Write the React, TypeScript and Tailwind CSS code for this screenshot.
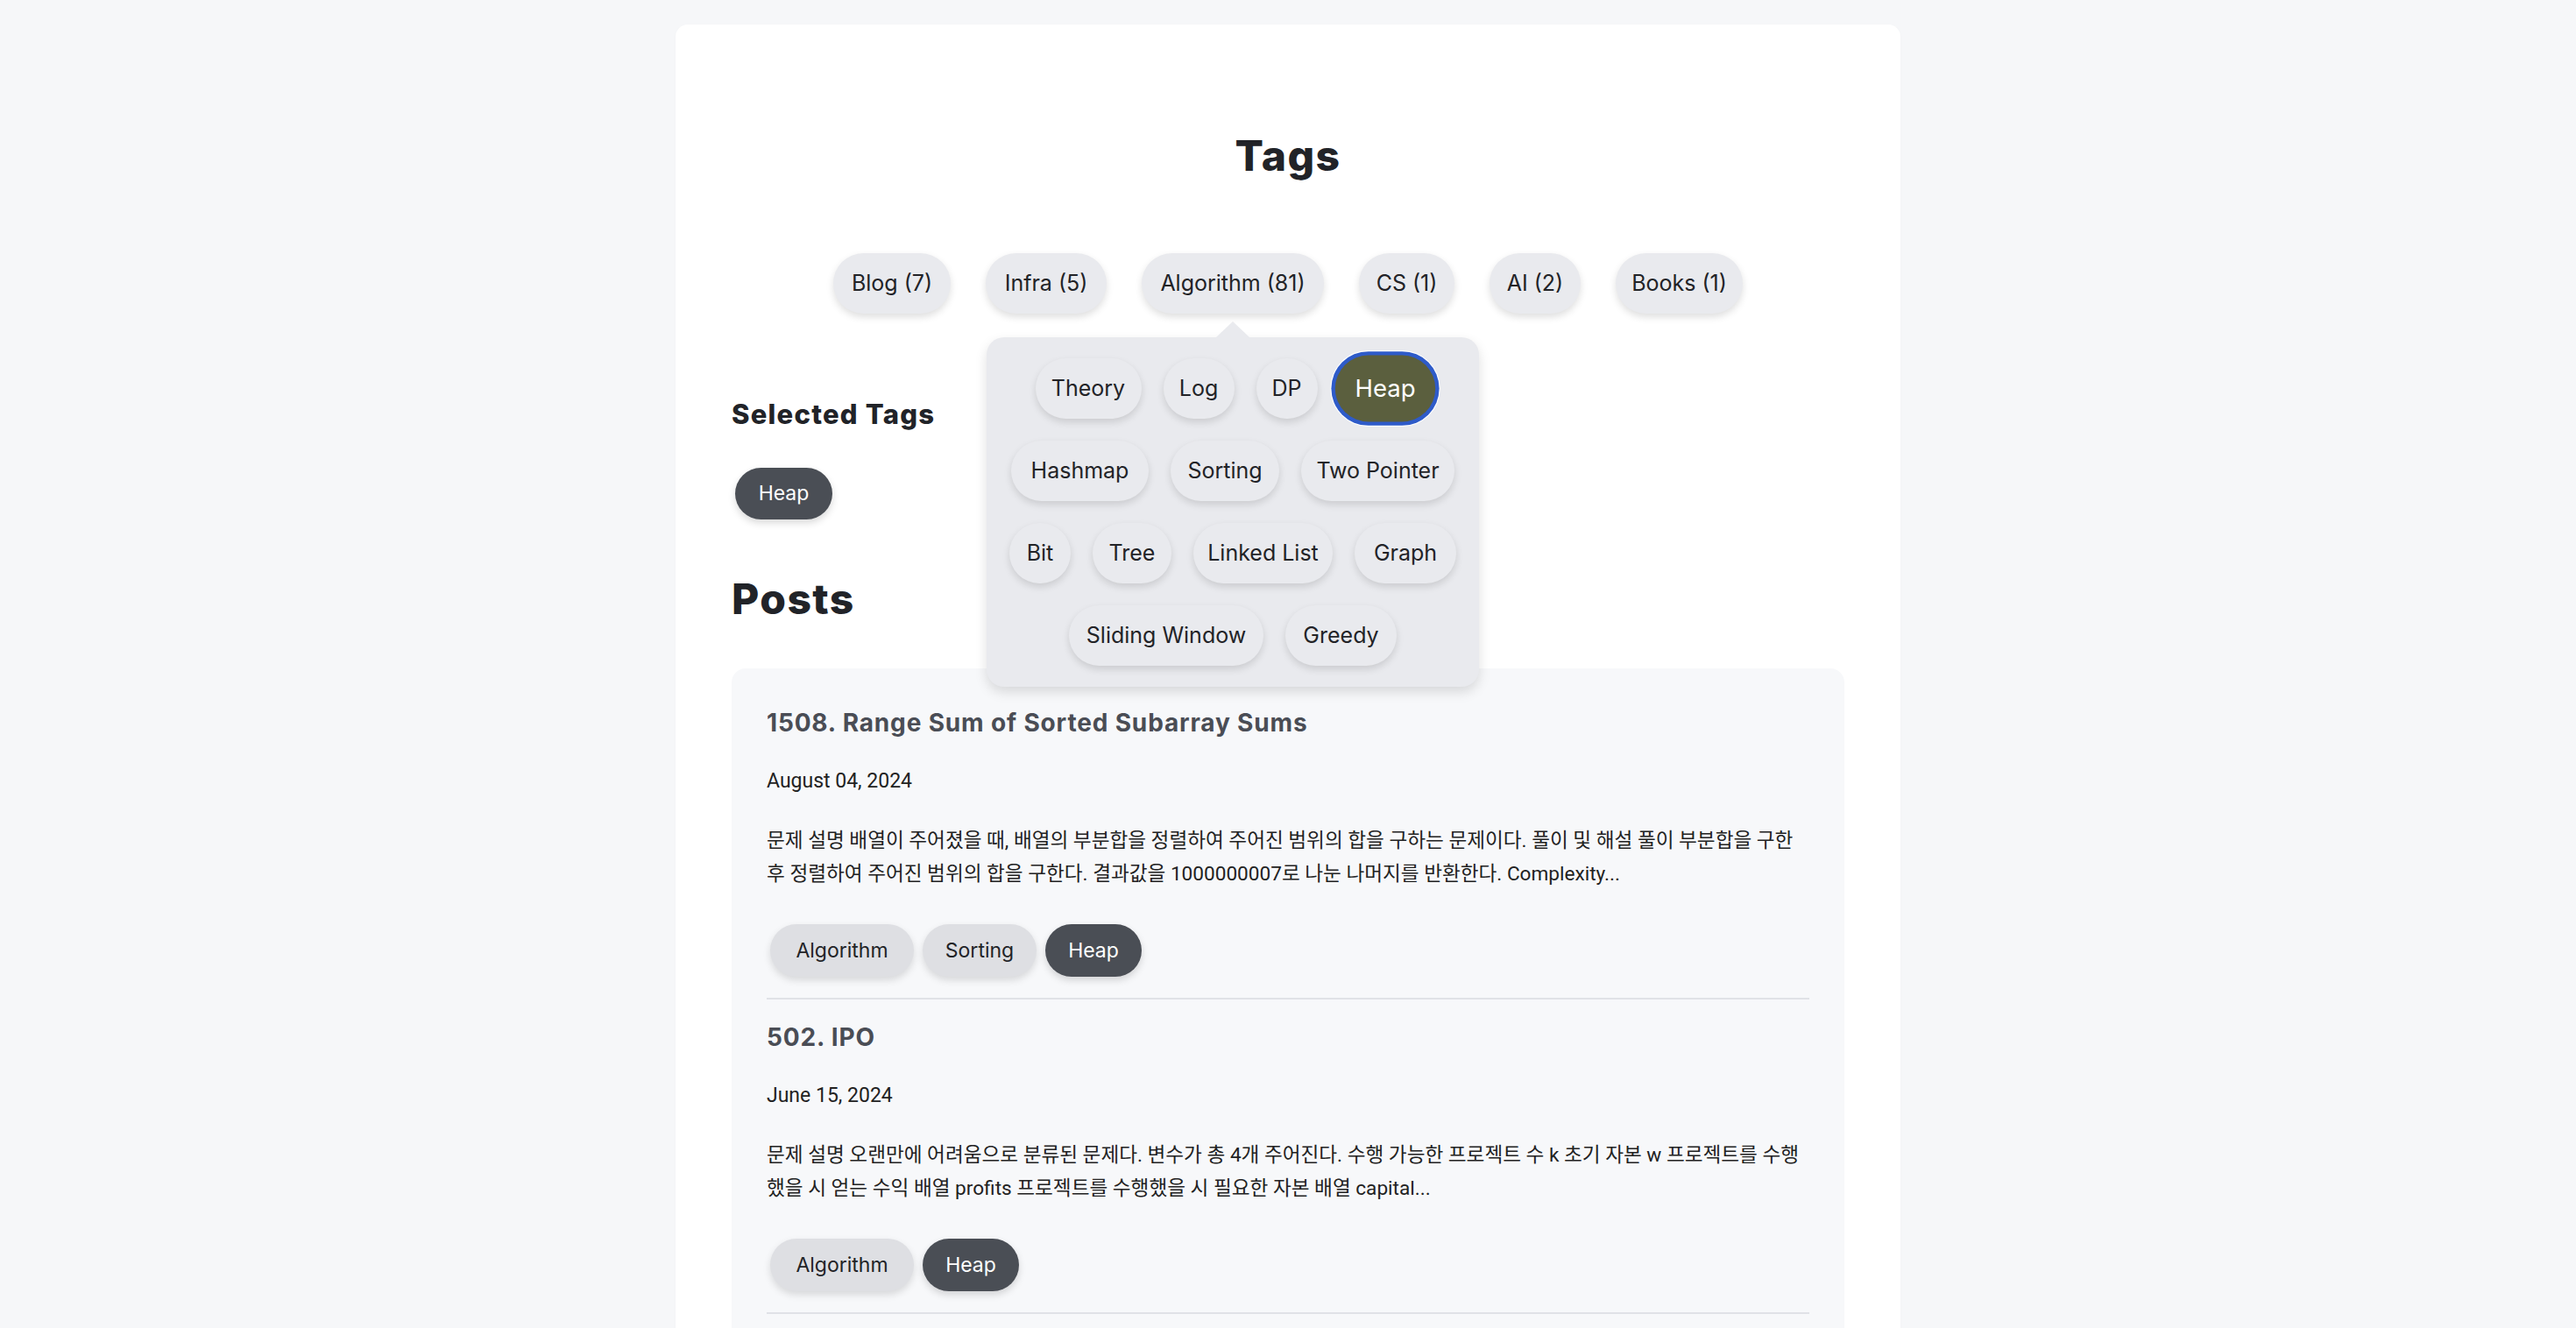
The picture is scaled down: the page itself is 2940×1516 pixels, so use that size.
import React from "react";

type Chip = { label: string; w: string; active?: boolean };

const topTags: Chip[] = [
  { label: "Blog (7)", w: "w-[134px]" },
  { label: "Infra (5)", w: "w-[138px]" },
  { label: "Algorithm (81)", w: "w-[208px]" },
  { label: "CS (1)", w: "w-[109px]" },
  { label: "AI (2)", w: "w-[104px]" },
  { label: "Books (1)", w: "w-[145px]" },
];

const popRows: Chip[][] = [
  [
    { label: "Theory", w: "w-[121px]" },
    { label: "Log", w: "w-[81px]" },
    { label: "DP", w: "w-[70px]" },
    { label: "Heap", w: "w-[104px]", active: true },
  ],
  [
    { label: "Hashmap", w: "w-[157px]" },
    { label: "Sorting", w: "w-[124px]" },
    { label: "Two Pointer", w: "w-[175px]" },
  ],
  [
    { label: "Bit", w: "w-[70px]" },
    { label: "Tree", w: "w-[90px]" },
    { label: "Linked List", w: "w-[159px]" },
    { label: "Graph", w: "w-[116px]" },
  ],
  [
    { label: "Sliding Window", w: "w-[222px]" },
    { label: "Greedy", w: "w-[127px]" },
  ],
];

type Post = {
  title: string;
  date: string;
  excerpt: string;
  tags: { label: string; w: string; dark?: boolean }[];
};

const posts: Post[] = [
  {
    title: "1508. Range Sum of Sorted Subarray Sums",
    date: "August 04, 2024",
    excerpt:
      "문제 설명 배열이 주어졌을 때, 배열의 부분합을 정렬하여 주어진 범위의 합을 구하는 문제이다. 풀이 및 해설 풀이 부분합을 구한 후 정렬하여 주어진 범위의 합을 구한다. 결과값을 1000000007로 나눈 나머지를 반환한다. Complexity...",
    tags: [
      { label: "Algorithm", w: "w-[164px]" },
      { label: "Sorting", w: "w-[130px]" },
      { label: "Heap", w: "w-[110px]", dark: true },
    ],
  },
  {
    title: "502. IPO",
    date: "June 15, 2024",
    excerpt:
      "문제 설명 오랜만에 어려움으로 분류된 문제다. 변수가 총 4개 주어진다. 수행 가능한 프로젝트 수 k 초기 자본 w 프로젝트를 수행했을 시 얻는 수익 배열 profits 프로젝트를 수행했을 시 필요한 자본 배열 capital...",
    tags: [
      { label: "Algorithm", w: "w-[164px]" },
      { label: "Heap", w: "w-[110px]", dark: true },
    ],
  },
];

function TagChip({ chip }: { chip: Chip }) {
  if (chip.active) {
    return (
      <div
        className={`${chip.w} flex h-[69px] scale-110 items-center justify-center rounded-full bg-[#5b5f3e] text-[25px] text-white shadow-[0_0_0_4px_#2e5bc9,0_0_0_5px_#ffffff]`}
      >
        {chip.label}
      </div>
    );
  }
  return (
    <div
      className={`${chip.w} flex h-[69px] items-center justify-center rounded-full bg-[#e9eaee] text-[25px] text-[#222327] shadow-[0_4px_8px_rgba(0,0,0,0.13)]`}
    >
      {chip.label}
    </div>
  );
}

function Popover() {
  return (
    <div className="absolute left-1/2 top-[96px] z-10 w-[562px] -translate-x-1/2">
      <div className="absolute -top-[18px] left-1/2 h-0 w-0 -translate-x-1/2 border-x-[19px] border-b-[18px] border-x-transparent border-b-[#e9eaee]" />
      <div className="flex flex-col gap-[25px] rounded-[20px] bg-[#e9eaee] px-[24px] py-[24px] shadow-[0_6px_14px_rgba(0,0,0,0.13)]">
        {popRows.map((row, i) => (
          <div key={i} className="flex justify-center gap-[25px]">
            {row.map((c) => (
              <TagChip key={c.label} chip={c} />
            ))}
          </div>
        ))}
      </div>
    </div>
  );
}

export default function App() {
  return (
    <div className="min-h-screen bg-[#f6f7f9] pt-[28px] font-[family-name:Inter,sans-serif]">
      <div className="mx-auto w-[1398px] rounded-[14px] bg-white px-[64px] pb-[64px] pt-[121px] shadow-[0_1px_3px_rgba(0,0,0,0.03)]">
        <h1 className="text-center text-[48px] font-extrabold leading-[58px] tracking-[0.03em] text-[#212328]">
          Tags
        </h1>

        <div className="mt-[82px] flex justify-center gap-[40px]">
          {topTags.map((c) => (
            <div key={c.label} className="relative">
              <TagChip chip={c} />
              {c.label.startsWith("Algorithm") && <Popover />}
            </div>
          ))}
        </div>

        <h2 className="mt-[96px] text-[31px] font-extrabold leading-[38px] tracking-[0.04em] text-[#212328]">
          Selected Tags
        </h2>
        <div className="mt-[42px] flex pl-[4px]">
          <div className="flex h-[59px] w-[111px] items-center justify-center rounded-full bg-[#4a4e55] text-[23px] text-white shadow-[0_4px_8px_rgba(0,0,0,0.15)]">
            Heap
          </div>
        </div>

        <h2 className="mt-[62px] text-[48px] font-extrabold leading-[58px] tracking-[0.03em] text-[#212328]">
          Posts
        </h2>

        <div className="mt-[50px] rounded-[16px] bg-[#f7f8fa] px-[40px] pb-[40px] pt-[44px]">
          {posts.map((p) => (
            <div key={p.title}>
              <h3 className="text-[28px] font-bold leading-[36px] tracking-[0.03em] text-[#4a4d55]">
                {p.title}
              </h3>
              <p className="mt-[32px] font-[family-name:Roboto,'Noto_Sans_CJK_KR',sans-serif] text-[23px] leading-[33px] text-[#222222]">
                {p.date}
              </p>
              <p className="mt-[33px] font-[family-name:Roboto,'Noto_Sans_CJK_KR',sans-serif] text-[22.6px] leading-[38px] text-[#222222]">
                {p.excerpt}
              </p>
              <div className="mt-[38px] flex gap-[10px] pl-[4px]">
                {p.tags.map((t) =>
                  t.dark ? (
                    <div
                      key={t.label}
                      className={`${t.w} flex h-[60px] items-center justify-center rounded-full bg-[#4a4e55] text-[23px] text-white shadow-[0_4px_8px_rgba(0,0,0,0.15)]`}
                    >
                      {t.label}
                    </div>
                  ) : (
                    <div
                      key={t.label}
                      className={`${t.w} flex h-[60px] items-center justify-center rounded-full bg-[#dedfe3] text-[23px] text-[#222327] shadow-[0_4px_8px_rgba(0,0,0,0.13)]`}
                    >
                      {t.label}
                    </div>
                  )
                )}
              </div>
              <div className="mb-[25px] mt-[24px] h-[2px] bg-[#e0e2e7]" />
            </div>
          ))}
        </div>
      </div>
    </div>
  );
}
